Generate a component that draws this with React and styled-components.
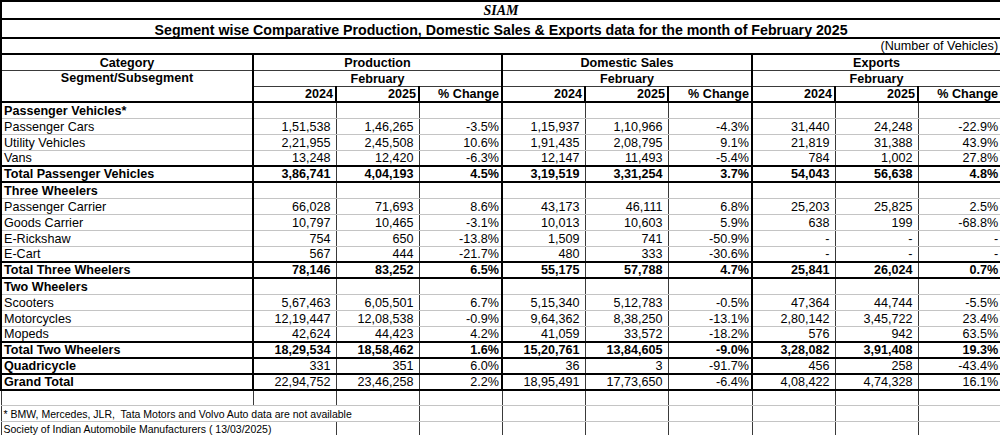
import React from "react";
import styled, { createGlobalStyle, css } from "styled-components";

const Global = createGlobalStyle`
  html, body { margin: 0; padding: 0; background: #fff; }
  body { font-family: "Liberation Sans", Arial, sans-serif; color: #000; }
`;

const LINES = {
  thick: "2px solid #000",
  thin: "1px solid #3a3a3a",
  grid: "1px solid #c4c4c4",
  none: "0 none transparent",
};

const Sheet = styled.table`
  border-collapse: collapse;
  table-layout: fixed;
  width: 1000px;
  font-size: 12.6px;
`;

const Row = styled.tr`
  height: ${(p) => p.$h}px;
`;

const Cell = styled.td`
  padding: 0 ${(p) => p.$pr ?? 2}px 0 ${(p) => p.$pl ?? 2}px;
  line-height: 14px;
  white-space: nowrap;
  overflow: visible;
  vertical-align: ${(p) => p.$valign || "bottom"};
  text-align: ${(p) => p.$align || "left"};
  font-weight: ${(p) => (p.$bold ? 700 : 400)};
  border-top: ${(p) => LINES[p.$t || "grid"]};
  border-bottom: ${(p) => LINES[p.$b || "grid"]};
  border-left: ${(p) => LINES[p.$l || "thin"]};
  border-right: ${(p) => LINES[p.$r || "thin"]};
  ${(p) =>
    p.$serif &&
    css`
      font-family: "Liberation Serif", "Times New Roman", serif;
      font-style: italic;
      font-size: 14px;
    `}
  ${(p) =>
    p.$size &&
    css`
      font-size: ${p.$size}px;
    `}
`;

const COLS = [252, 83, 83, 83, 83, 83, 84, 83, 83, 83];

const rows = [
  { type: "section", label: "Passenger Vehicles*" },
  { label: "Passenger Cars", v: ["1,51,538", "1,46,265", "-3.5%", "1,15,937", "1,10,966", "-4.3%", "31,440", "24,248", "-22.9%"] },
  { label: "Utility Vehicles", v: ["2,21,955", "2,45,508", "10.6%", "1,91,435", "2,08,795", "9.1%", "21,819", "31,388", "43.9%"] },
  { label: "Vans", v: ["13,248", "12,420", "-6.3%", "12,147", "11,493", "-5.4%", "784", "1,002", "27.8%"] },
  { type: "total", label: "Total Passenger Vehicles", v: ["3,86,741", "4,04,193", "4.5%", "3,19,519", "3,31,254", "3.7%", "54,043", "56,638", "4.8%"] },
  { type: "section", label: "Three Wheelers" },
  { label: "Passenger Carrier", v: ["66,028", "71,693", "8.6%", "43,173", "46,111", "6.8%", "25,203", "25,825", "2.5%"] },
  { label: "Goods Carrier", v: ["10,797", "10,465", "-3.1%", "10,013", "10,603", "5.9%", "638", "199", "-68.8%"] },
  { label: "E-Rickshaw", v: ["754", "650", "-13.8%", "1,509", "741", "-50.9%", "-", "-", "-"] },
  { label: "E-Cart", v: ["567", "444", "-21.7%", "480", "333", "-30.6%", "-", "-", "-"] },
  { type: "total", label: "Total Three Wheelers", v: ["78,146", "83,252", "6.5%", "55,175", "57,788", "4.7%", "25,841", "26,024", "0.7%"] },
  { type: "section", label: "Two Wheelers" },
  { label: "Scooters", v: ["5,67,463", "6,05,501", "6.7%", "5,15,340", "5,12,783", "-0.5%", "47,364", "44,744", "-5.5%"] },
  { label: "Motorcycles", v: ["12,19,447", "12,08,538", "-0.9%", "9,64,362", "8,38,250", "-13.1%", "2,80,142", "3,45,722", "23.4%"] },
  { label: "Mopeds", v: ["42,624", "44,423", "4.2%", "41,059", "33,572", "-18.2%", "576", "942", "63.5%"] },
  { type: "total", label: "Total Two Wheelers", v: ["18,29,534", "18,58,462", "1.6%", "15,20,761", "13,84,605", "-9.0%", "3,28,082", "3,91,408", "19.3%"] },
  { type: "total", plain: true, label: "Quadricycle", v: ["331", "351", "6.0%", "36", "3", "-91.7%", "456", "258", "-43.4%"] },
  { type: "total", plain: true, label: "Grand Total", v: ["22,94,752", "23,46,258", "2.2%", "18,95,491", "17,73,650", "-6.4%", "4,08,422", "4,74,328", "16.1%"] },
];

const heights = [16, 16, 16, 16, 16, 16, 16, 16, 16, 16, 16, 16, 16, 16, 16, 16, 16, 15];

const groups = ["Production", "Domestic Sales", "Exports"];

function DataRow({ row, h }) {
  const isTotal = row.type === "total";
  const edge = isTotal ? "thick" : "grid";
  const values = row.v || Array(9).fill("");
  return (
    <Row $h={h}>
      <Cell $l="thick" $r="thick" $t={edge} $b={edge} $bold={row.type !== undefined}>
        {row.label}
      </Cell>
      {values.map((val, i) => {
        const pct = i % 3 === 2;
        return (
          <Cell
            key={i}
            $align="right"
            $pr={pct ? 2 : 5}
            $r={pct ? "thick" : "thin"}
            $t={edge}
            $b={edge}
            $bold={isTotal && !row.plain}
          >
            {val}
          </Cell>
        );
      })}
    </Row>
  );
}

export default function App() {
  return (
    <>
      <Global />
      <Sheet>
        <colgroup>
          {COLS.map((w, i) => (
            <col key={i} style={{ width: w }} />
          ))}
        </colgroup>
        <tbody>
          <Row $h={18}>
            <Cell colSpan={10} $align="center" $serif $bold $t="thick" $b="thick" $l="thick" $r="thick">
              SIAM
            </Cell>
          </Row>
          <Row $h={19}>
            <Cell colSpan={10} $align="center" $bold $size={14.2} $t="thick" $b="thick" $l="thick" $r="thick">
              Segment wise Comparative Production, Domestic Sales &amp; Exports data for the month of February 2025
            </Cell>
          </Row>
          <Row $h={16}>
            <Cell colSpan={10} $align="right" $t="thick" $b="thick" $l="thick" $r="thick">
              (Number of Vehicles)
            </Cell>
          </Row>
          <Row $h={16}>
            <Cell $align="center" $bold $t="thick" $b="thin" $l="thick" $r="thick">
              Category
            </Cell>
            {groups.map((g) => (
              <Cell key={g} colSpan={3} $align="center" $bold $t="thick" $b="thin" $l="thick" $r="thick">
                {g}
              </Cell>
            ))}
          </Row>
          <Row $h={16}>
            <Cell rowSpan={2} $valign="top" $align="center" $bold $t="thin" $b="thick" $l="thick" $r="thick">
              Segment/Subsegment
            </Cell>
            {groups.map((g) => (
              <Cell key={g} colSpan={3} $align="center" $bold $t="thin" $b="thin" $l="thick" $r="thick">
                February
              </Cell>
            ))}
          </Row>
          <Row $h={16}>
            {groups.map((g) =>
              ["2024", "2025", "% Change"].map((y) => (
                <Cell key={g + y} $align="right" $bold $t="thin" $b="thick" $l="thick" $r="thick">
                  {y}
                </Cell>
              ))
            )}
          </Row>
          {rows.map((r, i) => (
            <DataRow key={r.label} row={r} h={heights[i]} />
          ))}
          <Row $h={15}>
            <Cell $t="thick" $l="thin" />
            {Array.from({ length: 9 }).map((_, i) => (
              <Cell key={i} $t="thick" />
            ))}
          </Row>
          <Row $h={16}>
            <Cell colSpan={3} $l="thin" $size={10.5}>
              * BMW, Mercedes, JLR,&nbsp; Tata Motors and Volvo Auto data are not available
            </Cell>
            {Array.from({ length: 7 }).map((_, i) => (
              <Cell key={i} />
            ))}
          </Row>
          <Row $h={15}>
            <Cell colSpan={2} $l="thin" $size={10.5}>
              Society of Indian Automobile Manufacturers ( 13/03/2025)
            </Cell>
            {Array.from({ length: 8 }).map((_, i) => (
              <Cell key={i} />
            ))}
          </Row>
        </tbody>
      </Sheet>
    </>
  );
}
